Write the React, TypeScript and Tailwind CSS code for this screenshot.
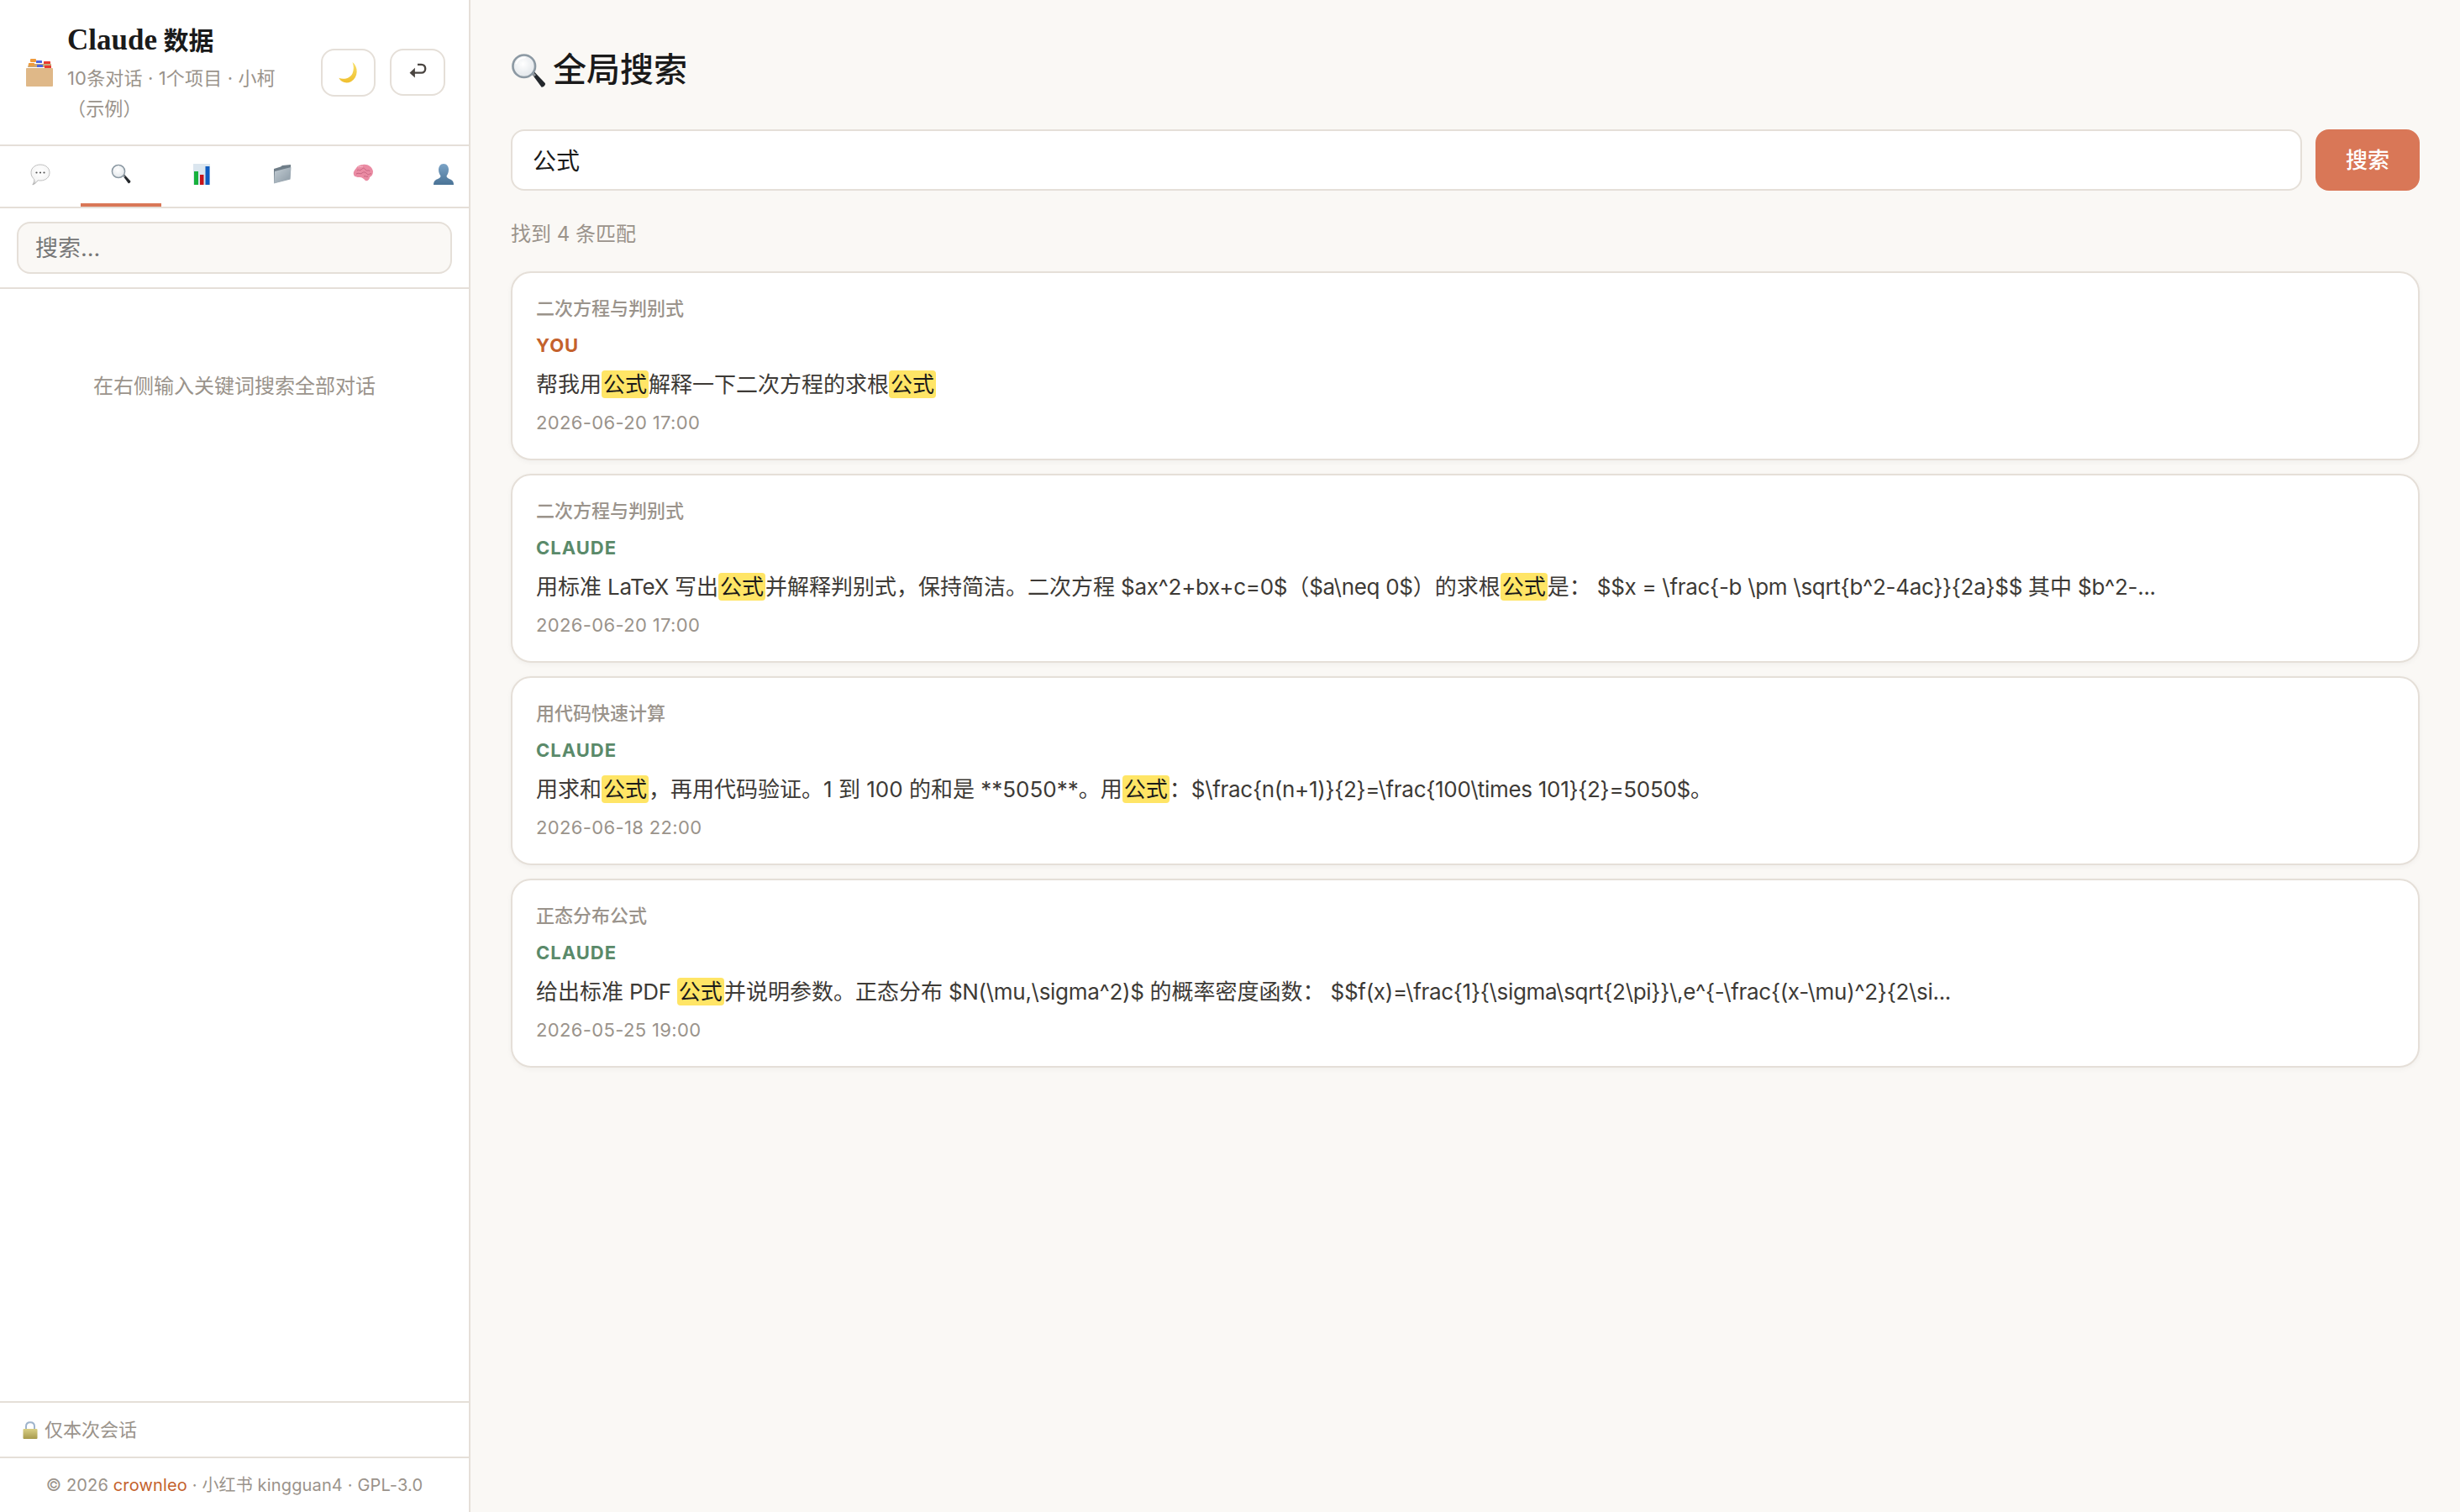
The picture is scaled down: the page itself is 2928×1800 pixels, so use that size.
import React from "react";

const CardBox = () => (
  <svg width="34" height="34" viewBox="0 0 34 34" className="shrink-0">
    <rect x="6" y="1" width="7" height="4" rx="1" fill="#ef9a3c" />
    <rect x="13" y="3" width="7" height="3" rx="0.5" fill="#4a63e0" />
    <rect x="22" y="4" width="8" height="3" rx="0.5" fill="#e8392f" />
    <path d="M4 7h27v4H3z" fill="#c9a878" />
    <rect x="4" y="6" width="7" height="3.5" rx="0.5" fill="#ef9a3c" />
    <rect x="14" y="8" width="7" height="3" rx="0.5" fill="#4a63e0" />
    <rect x="23" y="9" width="8" height="3" rx="0.5" fill="#e8392f" />
    <rect x="1" y="12" width="32" height="22" rx="1" fill="#dfb888" />
  </svg>
);
const Moon = () => (
  <svg width="26" height="27" viewBox="0 0 28 30">
    <defs>
      <linearGradient id="moonG" x1="0" y1="0" x2="0" y2="1">
        <stop offset="0" stopColor="#f7e06a" />
        <stop offset="1" stopColor="#f0bf2e" />
      </linearGradient>
    </defs>
    <path d="M19 1C27 7 27 21 17 27 11 30 4 28 1 22 8 25 16 22 19 16 21 11 21 6 19 1Z" fill="url(#moonG)" />
  </svg>
);
const ReturnArrow = () => (
  <svg width="22" height="18" viewBox="0 0 24 20" fill="none" stroke="#4a4541" strokeWidth="2.6" className="mb-[5px]">
    <path d="M5 13H17C24 13 24 2 17 2H12" />
    <path d="M8.5 6.5V19.5L1.5 13Z" fill="#4a4541" stroke="none" />
  </svg>
);
const Speech = () => (
  <svg width="24" height="26" viewBox="0 0 24 26">
    <defs>
      <radialGradient id="spG" cx="0.5" cy="0.35" r="0.7">
        <stop offset="0" stopColor="#ffffff" />
        <stop offset="0.7" stopColor="#f5f5f5" />
        <stop offset="1" stopColor="#b8b8b8" />
      </radialGradient>
    </defs>
    <path d="M12 1C18.5 1 23 5 23 10.5S18.5 20 12 20C10.8 20 10 20 9 19.7 8 21.5 6 24 2.8 25 4 23 5 21 4.6 18.2 2.3 16.5 1 13.8 1 10.5 1 5 5.5 1 12 1Z" fill="url(#spG)" stroke="#b0b0b0" strokeWidth="0.8" />
    <circle cx="7.5" cy="10.5" r="1.1" fill="#555" />
    <circle cx="12" cy="10.5" r="1.1" fill="#555" />
    <circle cx="16.5" cy="10.5" r="1.1" fill="#555" />
  </svg>
);
const Magnifier = ({ size = 24, id }: { size?: number; id: string }) => (
  <svg width={size} height={size} viewBox="0 0 24 24">
    <defs>
      <radialGradient id={id} cx="0.45" cy="0.4" r="0.65">
        <stop offset="0" stopColor="#ffffff" />
        <stop offset="1" stopColor="#dfe4e8" />
      </radialGradient>
    </defs>
    <path d="M14.2 14.2 16 12.8 23.3 20.6C24 21.6 21.8 23.8 20.8 23.2Z" fill="#24282c" />
    <path d="M14 14.2 15.2 13 17.2 15 15.8 16.2Z" fill="#8d9399" />
    <circle cx="9" cy="9" r="7.6" fill={`url(#${id})`} stroke="#8c99a3" strokeWidth="1.5" />
    <path d="M3.5 7.5C4.5 4.5 7 3 10 3" stroke="#ffffff" strokeWidth="1" fill="none" />
  </svg>
);
const Bars = () => (
  <svg width="20" height="25" viewBox="0 0 20 25">
    <rect width="20" height="25" fill="#dbe6ef" />
    <rect x="1" y="9" width="5" height="16" fill="#17b13d" />
    <rect x="8" y="13" width="4.5" height="12" fill="#c8141a" />
    <rect x="14.5" y="3" width="5" height="22" fill="#0f5cc0" />
  </svg>
);
const Folder = () => (
  <svg width="22" height="24" viewBox="0 0 22 24">
    <defs>
      <linearGradient id="flG" x1="0" y1="0" x2="1" y2="1">
        <stop offset="0" stopColor="#c4ced5" />
        <stop offset="1" stopColor="#8a98a3" />
      </linearGradient>
    </defs>
    <path d="M1 6 9 3.5 11 2 21 1 21 4 20 18 1 23Z" fill="#6f7d88" />
    <path d="M2 9 21.5 4 20.5 18.5 1 23.5Z" fill="url(#flG)" />
  </svg>
);
const Brain = () => (
  <svg width="24" height="22" viewBox="0 0 24 22">
    <path d="M1 13C0 9 3 7 4 5 6 2 9 1 12 1 17 0 23 3 24 9 24 13 22 15 20 16 20 19 17 21 15 20 13 18 11 16 8 16 5 16 2 16 1 13Z" fill="#ea8ba3" />
    <path d="M5 8C7 6 8 9 10 7S13 4 15 7 19 6 20 9M4 12C7 10 9 13 11 11S15 10 17 12 20 11 22 12M13 15C15 14 16 16 18 15" stroke="#c2607c" strokeWidth="0.9" fill="none" />
    <path d="M6 4C8 3 10 4 12 3" stroke="#f6b8c6" strokeWidth="1" fill="none" />
  </svg>
);
const Bust = () => (
  <svg width="24" height="25" viewBox="0 0 24 25">
    <defs>
      <linearGradient id="buG" x1="0" y1="0" x2="0" y2="1">
        <stop offset="0" stopColor="#7ba3c6" />
        <stop offset="1" stopColor="#4a7396" />
      </linearGradient>
    </defs>
    <path d="M12 0C16 0 18 3.5 18 7 18 10.5 16.5 13 15.5 14.5 15.5 17 19 18 21 19 23 20 24 22 24 25H0C0 22 1 20 3 19 5 18 8.5 17 8.5 14.5 7.5 13 6 10.5 6 7 6 3.5 8 0 12 0Z" fill="url(#buG)" />
  </svg>
);
const Lock = () => (
  <svg width="18" height="21" viewBox="0 0 18 21">
    <defs>
      <linearGradient id="loG" x1="0" y1="0" x2="0" y2="1">
        <stop offset="0" stopColor="#d9cf85" />
        <stop offset="1" stopColor="#a79a4c" />
      </linearGradient>
    </defs>
    <path d="M4 10V6C4 3 6 1.2 9 1.2S14 3 14 6V10" fill="none" stroke="#9fb4cc" strokeWidth="2" />
    <rect x="0.5" y="9" width="17" height="12" rx="1" fill="url(#loG)" />
  </svg>
);

const tabs = [
  <Speech key="a" />,
  <Magnifier key="b" id="tabMag" />,
  <Bars key="c" />,
  <Folder key="d" />,
  <Brain key="e" />,
  <Bust key="f" />,
];

const Hit = ({ children }: { children: React.ReactNode }) => (
  <mark className="bg-[#ffe566] text-[#1a1a1a] rounded-[4px] px-[2px] py-[1px]">{children}</mark>
);
const L = ({ children }: { children: React.ReactNode }) => (
  <span className="tracking-[-0.3px]">{children}</span>
);

type R = { title: string; role: "YOU" | "CLAUDE"; date: string; body: React.ReactNode };
const results: R[] = [
  {
    title: "二次方程与判别式",
    role: "YOU",
    date: "2026-06-20 17:00",
    body: (<>帮我用<Hit>公式</Hit>解释一下二次方程的求根<Hit>公式</Hit></>),
  },
  {
    title: "二次方程与判别式",
    role: "CLAUDE",
    date: "2026-06-20 17:00",
    body: (<>用标准<L> LaTeX </L>写出<Hit>公式</Hit>并解释判别式，保持简洁。二次方程<L> $ax^2+bx+c=0$</L>（<L>$a\neq 0$</L>）的求根<Hit>公式</Hit>是：<L> $$x = \frac{"{"}-b \pm \sqrt{"{"}b^2-4ac{"}"}{"}"}{"{"}2a{"}"}$$ </L>其中<L> $b^2-...</L></>),
  },
  {
    title: "用代码快速计算",
    role: "CLAUDE",
    date: "2026-06-18 22:00",
    body: (<>用求和<Hit>公式</Hit>，再用代码验证。1 到 100 的和是 **5050**。用<Hit>公式</Hit>：<L>$\frac{"{"}n(n+1){"}"}{"{"}2{"}"}=\frac{"{"}100\times 101{"}"}{"{"}2{"}"}=5050$</L>。</>),
  },
  {
    title: "正态分布公式",
    role: "CLAUDE",
    date: "2026-05-25 19:00",
    body: (<>给出标准<L> PDF </L><Hit>公式</Hit>并说明参数。正态分布<L> $N(\mu,\sigma^2)$ </L>的概率密度函数：<L> $$f(x)=\frac{"{"}1{"}"}{"{"}\sigma\sqrt{"{"}2\pi{"}"}{"}"}\,e^{"{"}-\frac{"{"}(x-\mu)^2{"}"}{"{"}2\si...</L></>),
  },
];

export default function App() {
  return (
    <div className="flex h-[1800px] w-full bg-[#faf8f5] font-['Inter','Noto_Sans_CJK_SC',sans-serif] text-[#1a1a1a]">
      <aside className="flex h-full w-[560px] shrink-0 flex-col border-r-2 border-[#e5dfd8] bg-white">
        <header className="flex h-[174px] shrink-0 items-center border-b-2 border-[#e5dfd8] pl-[30px] pr-[28px]">
          <CardBox />
          <div className="ml-[16px] w-[270px] shrink-0 pt-[3px]">
            <div className="font-['Liberation_Serif','Noto_Sans_CJK_SC',serif] text-[30px] font-bold leading-[40px] text-[#1a1a1a]">
              <span className="text-[35px]">Claude</span> 数据
            </div>
            <div className="mt-[6px] text-[22px] leading-[36px] tracking-[0.15px] text-[#9a938b]">
              10条对话 · 1个项目 · 小柯（示例）
            </div>
          </div>
          <div className="ml-auto flex items-center gap-[17px]">
            <button className="flex h-[57px] w-[65px] items-center justify-center rounded-[16px] border-2 border-[#e5dfd8] bg-white"><Moon /></button>
            <button className="flex h-[56px] w-[66px] items-center justify-center rounded-[16px] border-2 border-[#e5dfd8] bg-white"><ReturnArrow /></button>
          </div>
        </header>

        <nav className="flex h-[74px] shrink-0 overflow-hidden border-b-2 border-[#e5dfd8]">
          {tabs.map((icon, i) => (
            <div
              key={i}
              className={
                i === 1
                  ? "flex h-full w-[96px] shrink-0 items-start justify-center border-b-4 border-[#d97757] pt-[21px]"
                  : "flex h-full w-[96px] shrink-0 items-start justify-center pt-[21px]"
              }
            >
              {icon}
            </div>
          ))}
        </nav>

        <div className="shrink-0 border-b-2 border-[#e5dfd8] px-[20px] py-[16px]">
          <input
            placeholder="搜索..."
            className="h-[62px] w-full rounded-[16px] border-2 border-[#e5dfd8] bg-[#faf8f5] px-[20px] text-[27px] outline-none placeholder:text-[#777]"
          />
        </div>

        <div className="flex-1 px-[20px] pt-[98px] text-center text-[24px] leading-[36px] text-[#9a938b]">
          在右侧输入关键词搜索全部对话
        </div>

        <div className="flex h-[66px] shrink-0 items-center gap-[8px] border-t-2 border-[#e5dfd8] pl-[27px] text-[22px] text-[#9a938b]">
          <Lock />
          <span>仅本次会话</span>
        </div>
        <div className="flex h-[66px] shrink-0 items-center justify-center border-t-2 border-[#e5dfd8] text-[20px] tracking-[0.15px] text-[#9a938b]">
          <span>© 2026 <span className="text-[#c4622d]">crownleo</span> · 小红书 kingguan4 · GPL-3.0</span>
        </div>
      </aside>

      <main className="min-w-0 flex-1 px-[48px] pt-[54px]">
        <h1 className="flex h-[60px] items-center gap-[8px] font-['Liberation_Serif','Noto_Sans_CJK_SC',serif] text-[40px] font-medium text-[#1a1a1a]">
          <Magnifier size={42} id="titleMag" />
          <span>全局搜索</span>
        </h1>
        <div className="mt-[40px] flex gap-[16px]">
          <input
            defaultValue="公式"
            className="h-[73px] min-w-0 flex-1 rounded-[16px] border-2 border-[#e5dfd8] bg-white px-[24px] pb-[2px] text-[28px] text-[#1a1a1a] outline-none"
          />
          <button className="h-[73px] w-[124px] rounded-[16px] bg-[#d97757] text-[26px] font-medium text-white">搜索</button>
        </div>
        <div className="mt-[34px] h-[36px] text-[24px] leading-[36px] text-[#9a938b]">找到 4 条匹配</div>
        <div className="mt-[26px] flex flex-col gap-[16px]">
          {results.map((r, i) => (
            <article
              key={i}
              className="h-[225px] rounded-[24px] border-2 border-[#e5dfd8] bg-white px-[28px] pt-[24px] shadow-[0_2px_6px_rgba(0,0,0,0.04)]"
            >
              <div className="text-[22px] font-medium leading-[36px] text-[#9a938b]">{r.title}</div>
              <div className={
                r.role === "YOU"
                  ? "mt-[8px] text-[22px] font-bold leading-[36px] tracking-[1px] text-[#c4622d]"
                  : "mt-[8px] text-[22px] font-bold leading-[36px] tracking-[1px] text-[#5a8a6a]"
              }>{r.role}</div>
              <div className="mt-[9px] whitespace-nowrap text-[26px] leading-[40px] text-[#3d3a36]">{r.body}</div>
              <div className="mt-[7px] text-[22px] leading-[36px] tracking-[0.35px] text-[#9a938b]">{r.date}</div>
            </article>
          ))}
        </div>
      </main>
    </div>
  );
}
